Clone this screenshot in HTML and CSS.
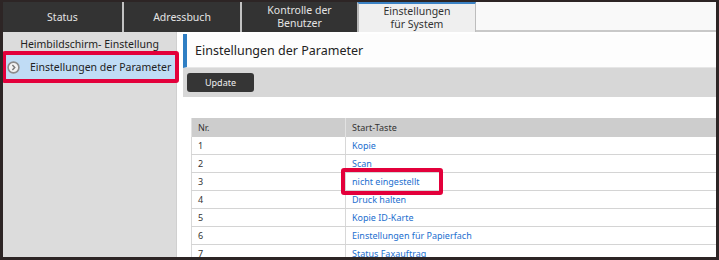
FILE: index.html
```html
<!DOCTYPE html>
<html lang="de">
  <head>
    <meta charset="UTF-8" />
    <meta name="viewport" content="width=device-width, initial-scale=1.0" />
    <title>Einstellungen der Parameter</title>
    <link rel="stylesheet" href="styles.css">
  </head>
  <body>
    <div class="screen">
      <div class="tabs">
        <div class="tab first">Status</div>
        <div class="tab">Adressbuch</div>
        <div class="tab third">Kontrolle der<br>Benutzer</div>
        <div class="tab active">Einstellungen<br>für System</div>
        <div class="tab-fill"></div>
      </div>
      <div class="main">
        <div class="sidebar">
          <div class="side-item">Heimbildschirm- Einstellung</div>
          <div class="side-item selected">
            <svg class="side-icon" width="13" height="13" viewBox="0 0 13 13">
              <circle cx="6.5" cy="6.5" r="5.4" fill="#f3f3f3" stroke="#8c8c8c" stroke-width="1.6" />
              <path d="M5.4 4.1 L7.7 6.5 L5.4 8.9" fill="none" stroke="#7a7a7a" stroke-width="1.5" />
            </svg>
            Einstellungen der Parameter
          </div>
        </div>
        <div class="content">
          <div class="title">Einstellungen der Parameter</div>
          <div class="toolbar"><button class="btn">Update</button></div>
          <table class="grid">
            <thead>
              <tr><th class="col-nr">Nr.</th><th>Start-Taste</th></tr>
            </thead>
            <tbody>
              <tr><td>1</td><td><a href="#">Kopie</a></td></tr>
              <tr><td>2</td><td><a href="#">Scan</a></td></tr>
              <tr><td>3</td><td><a href="#">nicht eingestellt</a></td></tr>
              <tr><td>4</td><td><a href="#">Druck halten</a></td></tr>
              <tr><td>5</td><td><a href="#">Kopie ID-Karte</a></td></tr>
              <tr><td>6</td><td><a href="#">Einstellungen für Papierfach</a></td></tr>
              <tr><td>7</td><td><a href="#">Status Faxauftrag</a></td></tr>
            </tbody>
          </table>
        </div>
      </div>
      <div class="mark mark-side"></div>
      <div class="mark mark-cell"></div>
    </div>
  </body>
</html>
```

FILE: styles.css
```css
body {
  margin: 0;
  font-family: "Noto Sans", "Open Sans", sans-serif;
  background: #fff;
}
.screen {
  position: relative;
  width: 719px;
  height: 260px;
  box-sizing: border-box;
  border-style: solid;
  border-color: #2d2525;
  border-width: 2px 3px 3px 3px;
  overflow: hidden;
  background: #fff;
}
.tabs {
  display: flex;
  height: 30px;
  background: #f8f8f8;
}
.tab {
  width: 116px;
  background: #333;
  color: #e4e4e4;
  font-size: 10.5px;
  line-height: 13px;
  display: flex;
  align-items: center;
  justify-content: center;
  text-align: center;
  border-left: 2px solid #c2c2c2;
}
.tab.first {
  width: 119px;
  border-left: none;
}
.tab.third {
  width: 115px;
}
.tab.active {
  background: #efefef;
  color: #333;
  border-top: 2px solid #3b82c4;
  border-left: 2px solid #b8b8b8;
  border-right: 1px solid #bdbdbd;
}
.tab-fill {
  flex: 1;
  box-sizing: border-box;
  border-bottom: 2px solid #c9c9c9;
  background: #f9f9f9;
}
.main {
  display: flex;
  height: 225px;
}
.sidebar {
  width: 173px;
  background: #dcdcdc;
  border-right: 1px solid #d0d0d0;
}
.side-item {
  height: 22px;
  line-height: 22px;
  font-size: 10.5px;
  color: #222;
  text-align: center;
  padding-top: 1px;
}
.side-item.selected {
  height: 24px;
  line-height: 24px;
  padding-top: 0;
  text-align: left;
  background: #c0dcf5;
  display: flex;
  align-items: center;
}
.side-icon {
  margin: 0 10px 0 4px;
}
.content {
  flex: 1;
  margin-left: 6px;
  padding-top: 2px;
  min-width: 0;
}
.title {
  height: 34px;
  line-height: 34px;
  border-left: 4px solid #2f7ec3;
  padding-left: 8px;
  font-size: 12.5px;
  color: #222;
  background: #fdfdfd;
  border-bottom: 1px solid #e6e6e6;
  box-sizing: border-box;
}
.toolbar {
  height: 29px;
  box-sizing: border-box;
  background: #d7d7d7;
  padding: 5px 4px;
}
.btn {
  display: block;
  width: 67px;
  height: 19px;
  background: #353535;
  border: none;
  border-radius: 3px;
  color: #eee;
  font-family: "Noto Sans", "Open Sans", sans-serif;
  font-size: 9px;
  padding: 0;
}
.grid {
  margin: 21px 0 0 8px;
  width: calc(100% - 8px);
  border-collapse: collapse;
  border-left: 1px solid #dcdcdc;
  font-size: 9px;
}
.grid th {
  background: #cdcdcd;
  height: 19px;
  text-align: left;
  font-weight: normal;
  color: #333;
  padding: 0 6px;
  border-left: 1px solid #e2e2e2;
}
.grid .col-nr {
  width: 141px;
}
.grid td {
  height: 17px;
  padding: 0 6px;
  color: #333;
  border-bottom: 1px solid #d4d4d4;
  border-left: 1px solid #d8d8d8;
}
.grid a {
  color: #1d6fcf;
  text-decoration: none;
}
.mark {
  position: absolute;
  box-sizing: border-box;
  border: 4px solid #e3003b;
  border-radius: 3px;
}
.mark-side {
  left: -1px;
  top: 49px;
  width: 177px;
  height: 32px;
}
.mark-cell {
  left: 338px;
  top: 166px;
  width: 102px;
  height: 27px;
}
```
